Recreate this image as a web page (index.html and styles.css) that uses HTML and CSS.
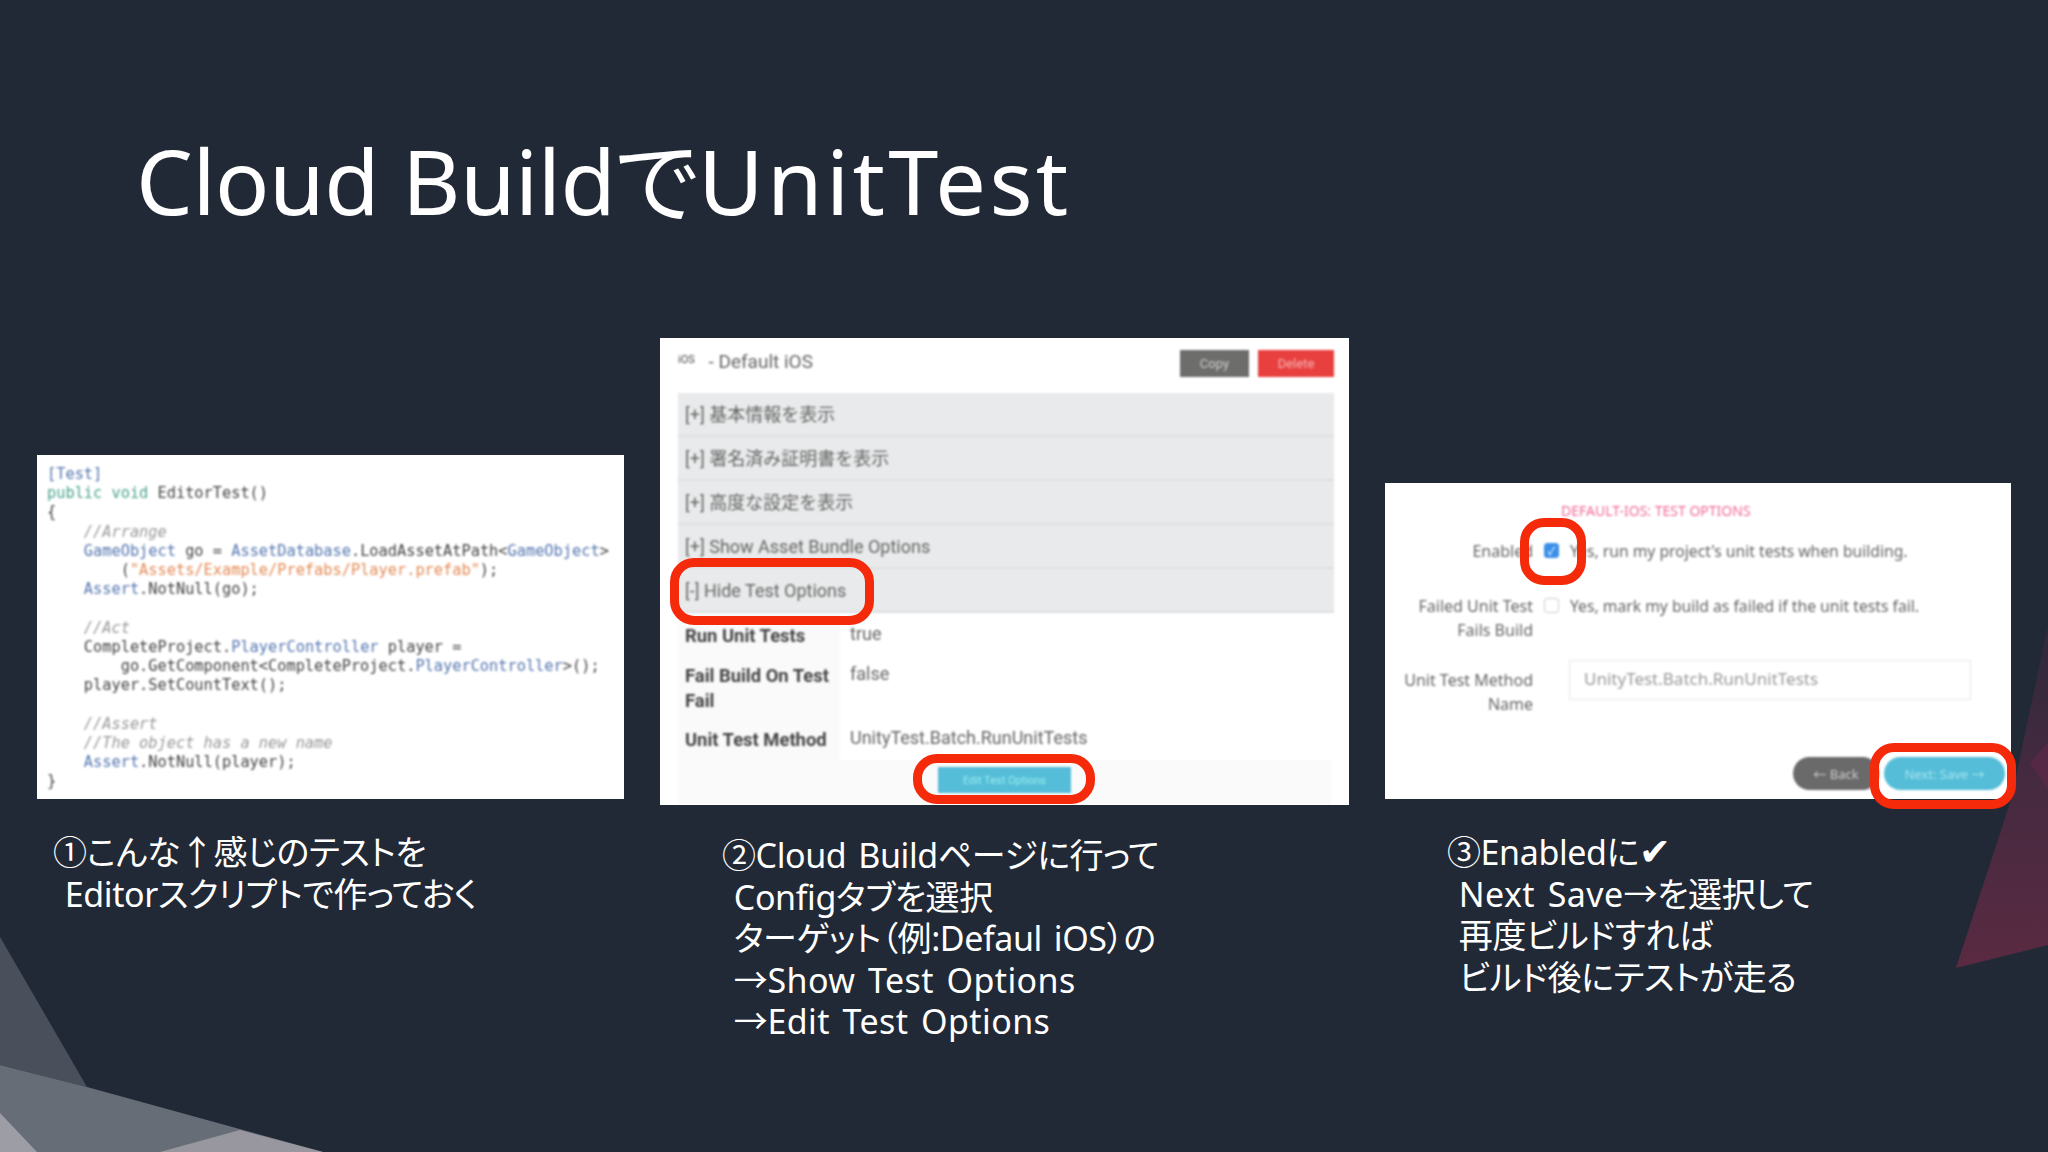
FILE: index.html
```html
<!DOCTYPE html>
<html lang="ja">
<head>
    <meta charset="UTF-8">
    <title>Cloud BuildでUnitTest</title>
    <link rel="stylesheet" href="styles.css">
</head>
<body>
    <div class="slide">
        <svg class="bg-shapes" width="2048" height="1152" viewBox="0 0 2048 1152">
            <defs>
                <linearGradient id="redFade" x1="0" y1="0" x2="0" y2="1">
                    <stop offset="0" stop-color="#30293b"/>
                    <stop offset="0.5" stop-color="#472a40"/>
                    <stop offset="1" stop-color="#5a2a42"/>
                </linearGradient>
            </defs>
            <polygon points="0,937 87,1087 0,1065" fill="#4a505b"/>
            <polygon points="0,1065 87,1087 323,1152 0,1152" fill="#676d77"/>
            <polygon points="0,1113 37,1152 0,1152" fill="#9c9da5"/>
            <polygon points="160,1152 240,1130 323,1152" fill="#98979f"/>
            <polygon points="1956,968 2011,800 2048,625 2048,945" fill="url(#redFade)"/>
            <polygon points="2030,763 2048,742 2048,790" fill="#552845"/>
        </svg>

        <h1 class="title">Cloud Buildで<span class="title-tail">UnitTest</span></h1>

        <div class="shot shot-code">
            <pre class="code"><span class="type">[Test]</span>
<span class="kw">public void</span> EditorTest()
{
    <i>//Arrange</i>
    <span class="type">GameObject</span> go = <span class="type">AssetDatabase</span>.LoadAssetAtPath&lt;<span class="type">GameObject</span>&gt;
        (<span class="str">"Assets/Example/Prefabs/Player.prefab"</span>);
    <span class="type">Assert</span>.NotNull(go);

    <i>//Act</i>
    CompleteProject.<span class="type">PlayerController</span> player =
        go.GetComponent&lt;CompleteProject.<span class="type">PlayerController</span>&gt;();
    player.SetCountText();

    <i>//Assert</i>
    <i>//The object has a new name</i>
    <span class="type">Assert</span>.NotNull(player);
}</pre>
        </div>

        <div class="shot shot-config">
            <div class="config">
                <div class="config-head">
                    <div class="config-name"><small>iOS</small> - Default iOS</div>
                    <div class="config-btns">
                        <span class="btn btn-grey">Copy</span>
                        <span class="btn btn-red">Delete</span>
                    </div>
                </div>
                <div class="acc">[+] 基本情報を表示</div>
                <div class="acc">[+] 署名済み証明書を表示</div>
                <div class="acc">[+] 高度な設定を表示</div>
                <div class="acc">[+] Show Asset Bundle Options</div>
                <div class="acc">[-] Hide Test Options</div>
                <div class="row row-1"><b>Run Unit Tests</b><span>true</span></div>
                <div class="row row-2"><b>Fail Build On Test Fail</b><span>false</span></div>
                <div class="row row-3"><b>Unit Test Method</b><span>UnityTest.Batch.RunUnitTests</span></div>
                <div class="config-foot"><span class="btn btn-blue">Edit Test Options</span></div>
            </div>
        </div>
        <div class="mark mark-hide"></div>
        <div class="mark mark-edit"></div>

        <div class="shot shot-form">
            <div class="form">
                <div class="form-title">DEFAULT-IOS: TEST OPTIONS</div>
                <div class="form-row form-row-1">
                    <label>Enabled</label>
                    <span class="check check-on">✓</span>
                    <span>Yes, run my project's unit tests when building.</span>
                </div>
                <div class="form-row form-row-2">
                    <label>Failed Unit Test<br>Fails Build</label>
                    <span class="check"></span>
                    <span>Yes, mark my build as failed if the unit tests fail.</span>
                </div>
                <div class="form-row form-row-3">
                    <label>Unit Test Method<br>Name</label>
                    <span class="field">UnityTest.Batch.RunUnitTests</span>
                </div>
                <div class="form-foot">
                    <span class="pill pill-grey">← Back</span>
                    <span class="pill pill-blue">Next: Save →</span>
                </div>
            </div>
        </div>
        <div class="mark mark-check"></div>
        <div class="mark mark-next"></div>

        <div class="note note-1">①こんな↑感じのテストを<br>&nbsp;Editorスクリプトで作っておく</div>
        <div class="note note-2">②Cloud Buildページに行って<br>&nbsp;Configタブを選択<br>&nbsp;ターゲット（例:Defaul iOS）の<br>&nbsp;→<span class="wide">Show Test Options</span><br>&nbsp;→<span class="wide">Edit Test Options</span></div>
        <div class="note note-3">③Enabledに<span class="tick">✔</span><br>&nbsp;<span class="wide">Next Save</span>→を選択して<br>&nbsp;再度ビルドすれば<br>&nbsp;ビルド後にテストが走る</div>
    </div>
</body>
</html>
```

FILE: styles.css
```css
* { box-sizing: border-box; }
body { margin: 0; background-color: #222936; font-family: "Noto Sans", "Noto Sans CJK JP", sans-serif; }
.slide { position: relative; width: 2048px; height: 1152px; overflow: hidden; background-color: #222936; }
.bg-shapes { position: absolute; left: 0; top: 0; }

.title { position: absolute; left: 136px; top: 120px; margin: 0; font-size: 90px; line-height: 120px; font-weight: 400; letter-spacing: -0.5px; color: #fff; white-space: nowrap; font-feature-settings: "palt"; }
.title-tail { letter-spacing: 3.3px; }

.note { position: absolute; color: #fff; font-size: 34px; font-weight: 400; line-height: 41.5px; letter-spacing: -0.4px; word-spacing: 3.4px; white-space: nowrap; font-feature-settings: "palt"; }
.note-1 { left: 53px; top: 832px; }
.note-2 { left: 722px; top: 835px; }
.note-3 { left: 1447px; top: 832px; }
.wide { letter-spacing: 0.4px; }
.tick { font-size: 38px; line-height: 30px; }

.shot { position: absolute; background: #fff; overflow: hidden; }
.shot-code { left: 37px; top: 455px; width: 587px; height: 344px; }
.shot-config { left: 660px; top: 338px; width: 689px; height: 467px; }
.shot-form { left: 1385px; top: 483px; width: 626px; height: 316px; }

/* the pasted screenshots are soft */
.code, .config, .form { filter: blur(1px); }

.code { margin: 0; padding: 10px 0 0 10px; font-family: "DejaVu Sans Mono", monospace; font-size: 15.3px; line-height: 19.2px; color: #444; }
.code i { color: #999; }
.code .type { color: #5576b0; }
.code .kw { color: #4aa38e; }
.code .str { color: #e58a55; }

.config { padding: 0 15px 0 18px; height: 100%; color: #666; font-size: 18px; font-family: "Roboto", "Noto Sans CJK JP", sans-serif; }
.config-head { display: flex; justify-content: space-between; height: 55px; padding: 10px 0 0 0; }
.config-name { font-size: 19px; line-height: 24px; }
.config-name small { font-size: 11px; vertical-align: 5px; margin-right: 9px; color: #444; }
.config-btns { display: flex; gap: 9px; padding-top: 2px; }
.btn { display: flex; align-items: center; justify-content: center; height: 27px; font-size: 13px; color: #ccc; }
.btn-grey { width: 69px; background: #6d6e6c; }
.btn-red { width: 76px; background: #e8403f; color: #f5b5b5; }
.btn-blue { width: 133px; height: 26px; background: #55bdd8; font-size: 11px; color: #9ee; }

.acc { height: 44px; padding: 11px 7px 0; background: #e9eaeb; border-bottom: 2px solid #dedfe0; white-space: nowrap; line-height: 22px; }

.row { display: flex; }
.row b { width: 162px; padding: 0 0 0 7px; background: #fafafa; font-size: 18.4px; line-height: 25px; color: #444; }
.row span { margin-left: 10px; line-height: 22px; }
.row-1 { height: 50px; }
.row-2 { height: 64px; }
.row-3 { height: 33px; }
.row-1 b, .row-1 span { padding-top: 10px; }
.config-foot { display: flex; justify-content: center; height: 45px; margin-right: 3px; padding-top: 7px; background: #fafafa; }

.form { position: relative; height: 100%; color: #666; font-size: 15.7px; }
.form-title { padding: 19px 0 0 176px; height: 56px; font-size: 14px; line-height: 18px; color: #f06a96; white-space: nowrap; }
.form-row { display: flex; align-items: flex-start; line-height: 24px; white-space: nowrap; }
.form-row label { width: 148px; text-align: right; font-size: 16px; flex-shrink: 0; }
.form-row-1 { height: 55px; }
.form-row-2 { height: 66px; }
.form-row-3 { height: 78px; }
.form-row-3 label { padding-top: 8px; }
.check { display: flex; align-items: center; justify-content: center; flex-shrink: 0; width: 15px; height: 15px; margin: 4px 11px 0 11px; border: 1px solid #ccc; border-radius: 3px; font-size: 11px; color: #fff; }
.check-on { background: #3b8fe8; border-color: #3b8fe8; }
.field { width: 402px; height: 40px; margin: 0 0 0 36px; padding: 6px 14px; border: 1px solid #e6e6e6; color: #999; font-size: 17px; }
.form-foot { position: absolute; right: 6px; bottom: 9px; display: flex; }
.pill { display: flex; align-items: center; justify-content: center; height: 33px; border-radius: 17px; font-size: 13px; }
.pill-grey { width: 86px; margin-right: 5px; background: #6a6a6a; color: #ccc; }
.pill-blue { width: 121px; background: #55bdd8; color: #a5e4f0; }

/* red call-out frames drawn over the screenshots */
.mark { position: absolute; border: 9px solid #f42a0a; border-radius: 24px; }
.mark-hide { left: 670px; top: 558px; width: 204px; height: 67px; }
.mark-edit { left: 913px; top: 754px; width: 182px; height: 50px; }
.mark-check { left: 1520px; top: 518px; width: 66px; height: 67px; }
.mark-next { left: 1870px; top: 743px; width: 146px; height: 66px; }
```
